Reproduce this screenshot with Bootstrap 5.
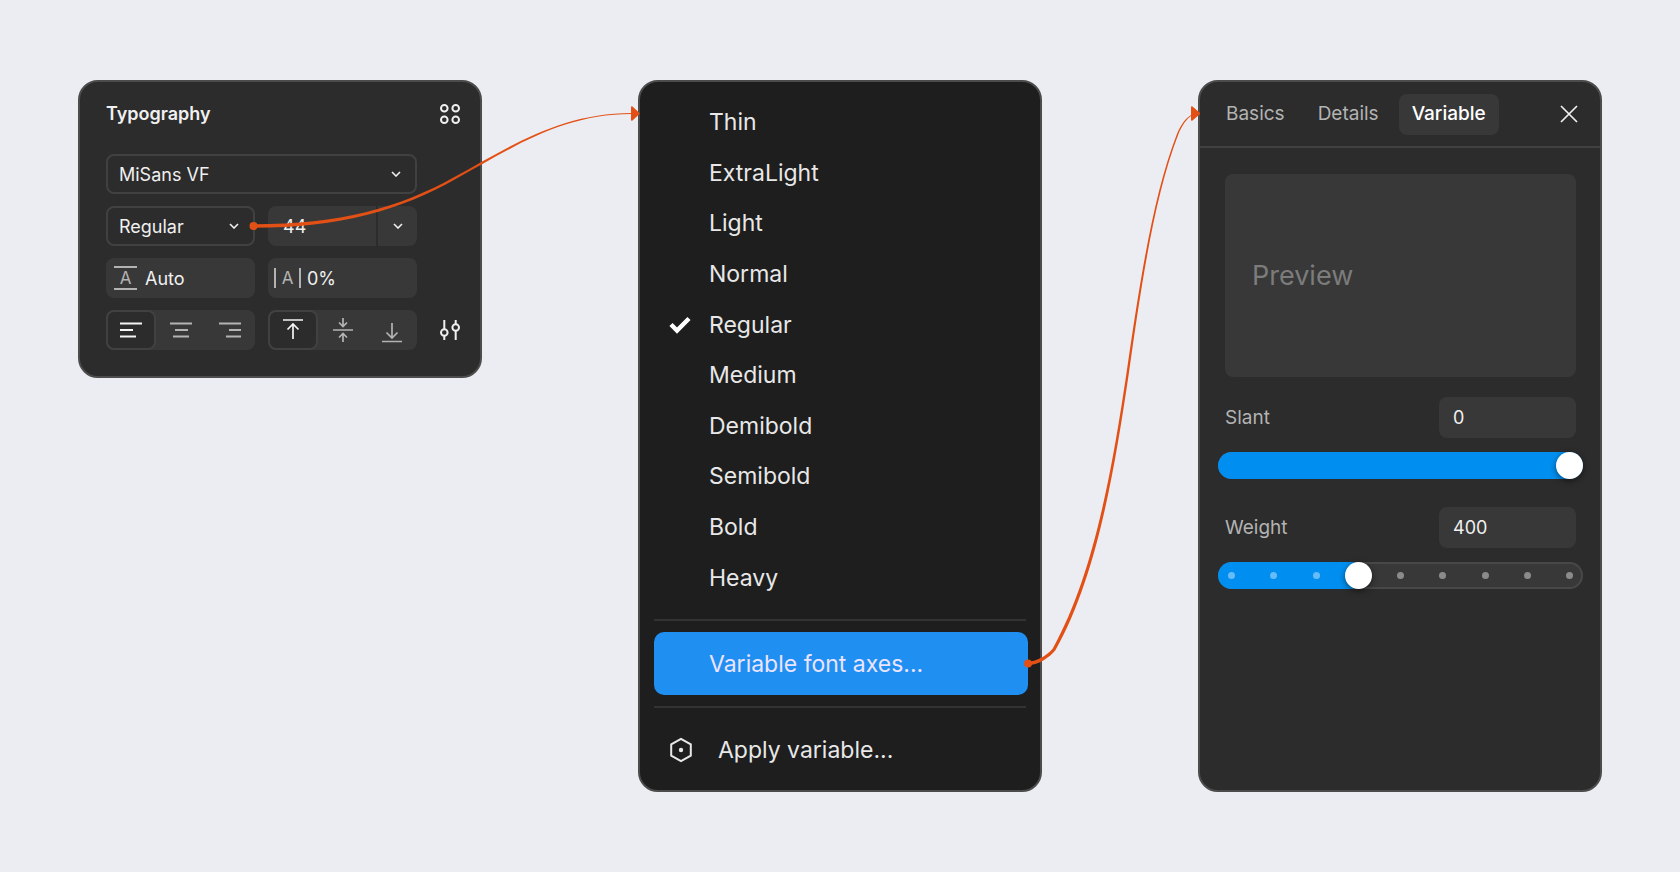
<!DOCTYPE html>
<html lang="en">
<head>
<meta charset="utf-8">
<meta name="viewport" content="width=device-width, initial-scale=1">
<title>Variable font axes</title>
<link href="https://cdn.jsdelivr.net/npm/bootstrap@5.3.0/dist/css/bootstrap.min.css" rel="stylesheet">
<style>
  :root { --panel: #2c2c2c; --field: #383838; --line: #414141; --edge: #4c4c4c; --accent: #e35016; --blue: #008ff0; }
  body { background: #ecedf2; color: #f0f0f0; font-family: Inter, "Liberation Sans", sans-serif; font-size: 18px; line-height: 24px; }
  svg { display: block; fill: none; stroke: currentColor; stroke-width: 2; flex: none; }
  .board { display: grid; grid-template-columns: repeat(3, minmax(0, 1fr)); gap: 156px; padding: 80px 78px; }
  .panel { background: var(--panel); border: 2px solid var(--edge); border-radius: 20px; }
  .links { inset: 0; width: 100%; height: 100%; pointer-events: none; z-index: 5; fill: var(--accent); stroke: none; }

  /* Typography panel */
  .typo { padding: 12px 10px 27px 26px; }
  .typo header { height: 40px; margin-bottom: 20px; }
  .typo h1 { font-size: 18px; font-weight: 600; margin: 0; }
  .typo-grid { display: grid; grid-template-columns: minmax(0, 1fr) minmax(0, 1fr) 40px; gap: 13px; }
  .typo-grid > .wide { grid-column: 1 / 3; }
  .typo-grid > .first { grid-column: 1; }
  .icon-btn { color: #f0f0f0; padding: 0; border: 0; width: 40px; height: 40px; display: grid; place-items: center; }
  .icon-btn:hover { color: #fff; }
  .pick { height: 40px; padding: 0 36px 0 11px; font-size: 18px; color: #f0f0f0; border: 2px solid var(--line); border-radius: 8px;
    background: transparent url("data:image/svg+xml,%3Csvg xmlns='http://www.w3.org/2000/svg' width='10' height='6'%3E%3Cpath d='M1 1l4 4 4-4' fill='none' stroke='%23f0f0f0' stroke-width='1.6'/%3E%3C/svg%3E") no-repeat right 14px center / 10px 6px; }
  .pick option { background: var(--panel); }
  .typo-grid { row-gap: 12px; }
  .typo { padding-bottom: 26px; }
  .field { background: var(--field); border-radius: 8px; height: 40px; display: flex; align-items: center; overflow: hidden; }
  .field input { background: none; border: 0; border-radius: 0; color: #f0f0f0; padding: 0; min-width: 0; width: 100%; font-size: 18px; height: 100%; }
  .field input:focus { outline: 0; }
  .field .size-input { padding-left: 15px; }
  .more { width: 41px; height: 100%; border-left: 2px solid var(--panel); border-radius: 0; flex: none; }
  .glyph { color: #b3b3b3; font-size: 17px; line-height: 20px; text-align: center; flex: none; }
  .glyph-y { width: 23px; margin: 0 8px; border-top: 2px solid; border-bottom: 2px solid; }
  .glyph-x { width: 27px; margin: 0 6px; border-left: 2px solid; border-right: 2px solid; }
  .seg { display: flex; background: var(--field); border-radius: 8px; height: 40px; }
  .seg label { flex: 1; display: grid; place-items: center; color: #b3b3b3; border: 2px solid transparent; border-radius: 8px; cursor: pointer; }
  .seg .btn-check:checked + label { background: var(--panel); border-color: #414141; color: #f4f4f4; }

  /* Style menu */
  .menu { background: #1e1e1e; padding: 15px 12px 5px 14px; }
  .menu button { display: flex; align-items: center; width: 100%; border: 0; background: none; color: #e8e8e8; font-size: 23px; line-height: 32px; padding: 0 15px; text-align: left; border-radius: 10px; }
  .menu .styles button { flex: 1; }
  .menu .slot { width: 40px; flex: none; }
  .menu .slot-lg { width: 49px; flex: none; }
  .menu .rule { height: 2px; background: #333; margin-right: 2px; }
  .menu .picked { background: #1f8ff2; height: 63px; margin: 11px 0; color: #ece4ff; }
  .menu .apply { height: 70px; margin-top: 7px; }

  /* Variable axes panel */
  .tabs { height: 66px; padding: 0 11px 0 13px; border-bottom: 2px solid var(--line); }
  .tabs .nav { gap: 7px; }
  .tabs .nav-link { background: none; border: 0; color: #b3b3b3; font-size: 19px; padding: 0 13px; height: 41px; border-radius: 8px; }
  .tabs .nav-link.active { background: var(--field); color: #fff; font-weight: 500; }
  .axes { padding: 26px 24px 26px 25px; }
  .preview { background: var(--field); border-radius: 8px; height: 203px; padding: 0 27px; font-size: 27px; color: #7c7c7c; }
  .axis-row { margin-top: 20px; color: #b3b3b3; font-size: 19px; }
  .axis-row.second { margin-top: 28px; }
  .axis-row .field { width: 137px; height: 41px; padding-left: 14px; }
  .slider { position: relative; height: 27px; margin: 14px -7px 0; border-radius: 14px; background: var(--field); box-shadow: inset 0 0 0 2px #484848; }
  .slider .fill { position: absolute; inset: 0 auto 0 0; background: var(--blue); border-radius: 14px; }
  .slider .dots { position: absolute; inset: 0; padding: 0 10px; display: flex; justify-content: space-between; align-items: center; }
  .slider .dots i { width: 7px; height: 7px; border-radius: 50%; background: #8b8b8b; }
  .slider .dots i.on { background: #66bcf6; }
  .slider input { position: absolute; inset: 0; width: 100%; height: 27px; margin: 0; appearance: none; background: none; }
  .slider input::-webkit-slider-thumb { appearance: none; width: 27px; height: 27px; border-radius: 50%; background: #fff; box-shadow: 0 2px 6px rgba(0,0,0,.5); }
  .slider input::-moz-range-thumb { width: 27px; height: 27px; border: 0; border-radius: 50%; background: #fff; }

  @media (max-width: 1199px) { .board { grid-template-columns: minmax(0, 420px); justify-content: center; gap: 32px; padding: 32px 16px; } .links { display: none; } }
</style>
</head>
<body>
<main class="board min-vh-100 position-relative">

  <section class="panel typo align-self-start" aria-label="Typography">
    <header class="d-flex justify-content-between align-items-center">
      <h1>Typography</h1>
      <button class="btn icon-btn" type="button" aria-label="Styles">
        <svg width="20" height="20" viewBox="0 0 20 20"><circle cx="4.3" cy="4.3" r="3.3"/><circle cx="15.7" cy="4.3" r="3.3"/><circle cx="4.3" cy="15.7" r="3.3"/><circle cx="15.7" cy="15.7" r="3.3"/></svg>
      </button>
    </header>
    <div class="typo-grid">
      <select class="form-select pick wide" aria-label="Font family"><option>MiSans VF</option></select>
      <select class="form-select pick first" aria-label="Font style"><option>Regular</option></select>
      <div class="field">
        <input class="size-input" type="text" value="44" aria-label="Font size">
        <button class="btn icon-btn more" type="button" aria-label="Font sizes"><svg width="10" height="6" viewBox="0 0 10 6"><path d="M1 1l4 4 4-4" stroke-width="1.6"/></svg></button>
      </div>
      <div class="field first"><span class="glyph glyph-y" aria-hidden="true">A</span><input type="text" value="Auto" aria-label="Line height"></div>
      <div class="field"><span class="glyph glyph-x" aria-hidden="true">A</span><input type="text" value="0%" aria-label="Letter spacing"></div>
      <div class="seg first" role="group" aria-label="Horizontal alignment">
        <input class="btn-check" type="radio" name="h" id="h1" checked><label for="h1" aria-label="Left"><svg width="24" height="18" viewBox="0 0 24 18"><path d="M1 2.5h22M1 9h13M1 15.5h16"/></svg></label>
        <input class="btn-check" type="radio" name="h" id="h2"><label for="h2" aria-label="Center"><svg width="24" height="18" viewBox="0 0 24 18"><path d="M1 2.5h22M6 9h13M4 15.5h16"/></svg></label>
        <input class="btn-check" type="radio" name="h" id="h3"><label for="h3" aria-label="Right"><svg width="24" height="18" viewBox="0 0 24 18"><path d="M1 2.5h22M11 9h12M8 15.5h15"/></svg></label>
      </div>
      <div class="seg" role="group" aria-label="Vertical alignment">
        <input class="btn-check" type="radio" name="v" id="v1" checked><label for="v1" aria-label="Top"><svg width="22" height="26" viewBox="0 0 22 26"><path d="M1 3h20M11 22V7M5.500 12.500L11 7l5.500 5.500" stroke-width="1.700"/></svg></label>
        <input class="btn-check" type="radio" name="v" id="v2"><label for="v2" aria-label="Middle"><svg width="22" height="26" viewBox="0 0 22 26"><path d="M1 13h20M11 1v8M7 5.500l4 4 4-4M11 25v-8M7 20.500l4-4 4 4" stroke-width="1.700"/></svg></label>
        <input class="btn-check" type="radio" name="v" id="v3"><label for="v3" aria-label="Bottom"><svg width="22" height="26" viewBox="0 0 22 26"><path d="M1 24.500h20M11 6v15M5.500 15.500l5.500 5.500 5.500-5.500" stroke-width="1.700"/></svg></label>
      </div>
      <button class="btn icon-btn" type="button" aria-label="Type settings">
        <svg width="20" height="20" viewBox="0 0 20 20"><path d="M4.300 0v9M4.300 16v4M15.700 0v4M15.700 11v9"/><circle cx="4.300" cy="12.500" r="3.300"/><circle cx="15.700" cy="7.500" r="3.300"/></svg>
      </button>
    </div>
  </section>

  <section class="panel menu d-flex flex-column" aria-label="Font style">
    <div class="styles d-flex flex-column flex-fill mb-3">
      <button type="button"><span class="slot"></span>Thin</button>
      <button type="button"><span class="slot"></span>ExtraLight</button>
      <button type="button"><span class="slot"></span>Light</button>
      <button type="button"><span class="slot"></span>Normal</button>
      <button type="button" aria-pressed="true"><span class="slot"><svg class="text-white" width="22" height="18" viewBox="0 0 22 18"><path d="M2 8.500l6 6L20 2.500" stroke-width="4.500"/></svg></span>Regular</button>
      <button type="button"><span class="slot"></span>Medium</button>
      <button type="button"><span class="slot"></span>Demibold</button>
      <button type="button"><span class="slot"></span>Semibold</button>
      <button type="button"><span class="slot"></span>Bold</button>
      <button type="button"><span class="slot"></span>Heavy</button>
    </div>
    <div class="rule"></div>
    <button class="picked" type="button"><span class="slot"></span>Variable font axes...</button>
    <div class="rule"></div>
    <button class="apply" type="button"><span class="slot-lg"><svg width="24" height="26" viewBox="0 0 24 26"><path d="M12 1.800l9.800 5.600v11.200L12 24.200l-9.800-5.600V7.400z"/><circle cx="12" cy="13" r="2.200" fill="currentColor" stroke="none"/></svg></span>Apply variable...</button>
  </section>

  <section class="panel" aria-label="Variable font settings">
    <div class="tabs d-flex align-items-center justify-content-between">
      <ul class="nav flex-nowrap">
        <li class="nav-item"><button class="nav-link" type="button">Basics</button></li>
        <li class="nav-item"><button class="nav-link" type="button">Details</button></li>
        <li class="nav-item"><button class="nav-link active" type="button">Variable</button></li>
      </ul>
      <button class="btn icon-btn" type="button" aria-label="Close"><svg width="18" height="18" viewBox="0 0 18 18"><path d="M1 1l16 16M17 1L1 17" stroke-width="1.700"/></svg></button>
    </div>
    <div class="axes">
      <div class="preview d-flex align-items-center">Preview</div>
      <div class="axis-row d-flex align-items-center justify-content-between">
        <label for="slant">Slant</label>
        <div class="field"><input id="slant" type="text" value="0"></div>
      </div>
      <div class="slider"><div class="fill" style="width:100%"></div><input type="range" min="-10" max="0" value="0" aria-label="Slant"></div>
      <div class="axis-row second d-flex align-items-center justify-content-between">
        <label for="weight">Weight</label>
        <div class="field"><input id="weight" type="text" value="400"></div>
      </div>
      <div class="slider">
        <div class="fill" style="width:40%"></div>
        <div class="dots"><i class="on"></i><i class="on"></i><i class="on"></i><i class="on"></i><i></i><i></i><i></i><i></i><i></i></div>
        <input type="range" min="100" max="900" step="100" value="400" aria-label="Weight">
      </div>
    </div>
  </section>

  <!-- Connectors taper from the source dot to the arrow -->
  <svg class="links position-absolute" viewBox="0 0 1680 872" preserveAspectRatio="none" aria-hidden="true">
    <circle cx="253.500" cy="226" r="4"/>
    <path d="M254 224.200C340 224.200 399 208 454.400 177C509 147 560 112.900 632 112.900V114.100C560 114.100 511 149 455.600 179C401 210 340 227.800 254 227.800Z"/>
    <path d="M631 107.500q0-2 1.500-1l6.500 6q1 1 0 2l-6.500 6q-1.500 1-1.500-1z"/>
    <circle cx="1028" cy="663.600" r="4"/>
    <path d="M1028 661.800C1037 661 1046 656 1052.600 648.700C1094.500 574 1112.700 465 1126.500 373C1140 280 1153.200 195 1177 133.700C1180.500 125.500 1185.500 117.500 1192 114.400V115.500C1186.500 118.500 1181.500 126.500 1178.400 134.300C1154.800 195 1142 280 1128.900 373C1115.300 465 1097.500 576 1055.400 650.300C1050 657 1039 665 1028 665.400Z"/>
    <path d="M1191 107.500q0-2 1.500-1l7 6q1 1 0 2l-7 6q-1.500 1-1.500-1z"/>
  </svg>
</main>
<script src="https://cdn.jsdelivr.net/npm/bootstrap@5.3.0/dist/js/bootstrap.bundle.min.js"></script>
</body>
</html>
